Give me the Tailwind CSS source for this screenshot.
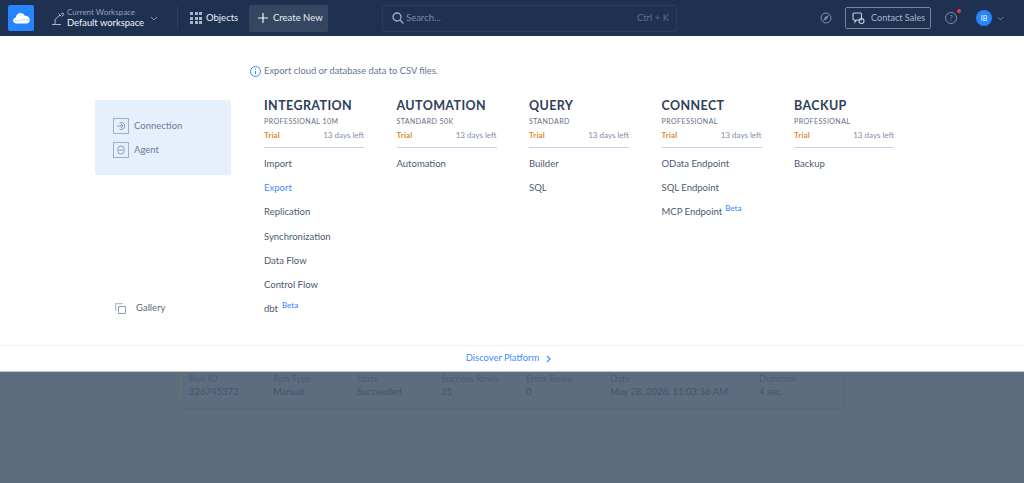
<!DOCTYPE html>
<html lang="en">
<head>
<meta charset="UTF-8" />
<title>Default workspace</title>
<script src="https://cdn.jsdelivr.net/npm/@tailwindcss/browser@4"></script>
</head>
<body class="h-[483px] w-[1024px] overflow-hidden bg-[#5e6c80] font-['Lato','Noto_Sans',sans-serif]">

<!-- top bar -->
<header class="flex h-9 items-center bg-[#1e3150] text-[#e8edf4]">
  <div class="ml-[8px] flex h-[26px] w-[26px] items-center justify-center rounded-[2px] bg-[#2684ff]">
    <svg width="17" height="12" viewBox="0 0 17 12"><path fill="#fff" d="M3.500 11.500C1.500 11.500.2 10.200.2 8.500c0-1.500 1-2.700 2.600-3C3.200 2.800 5.200 1 7.600 1c2 0 3.500 1.100 4.200 2.800 2.900-.2 5 1.800 5 4.200 0 2-1.400 3.500-3.400 3.500z"/><path fill="none" stroke="#9cc4ff" stroke-width=".7" d="M2 9c3 1.200 6-2 9-1.500 2 .3 3.500.8 5 0"/></svg>
  </div>
  <svg class="ml-[17px]" width="15" height="15" viewBox="0 0 15 15" fill="none" stroke="#a9b6c8" stroke-width="1"><path d="M1 13.500h9M4 13V8.500L9 4M7.500 2.500l3 3M10 3l2-1 1 1.500-2 1.500"/></svg>
  <div class="ml-[1px] flex w-[83px] flex-col whitespace-nowrap">
    <span class="text-[8px] leading-[10px] text-[#94a3b8]">Current Workspace</span>
    <span class="text-[9.400px] leading-[12px] text-[#f1f5f9]">Default workspace</span>
  </div>
  <svg width="8" height="5" viewBox="0 0 8 5" fill="none" stroke="#8595ab"><path d="M1 1l3 3 3-3"/></svg>
  <div class="ml-[19px] h-6 w-px bg-[#2c3f5d]"></div>
  <div class="ml-[12px] grid grid-cols-3 gap-[1.500px]">
    <i class="size-[3px] bg-[#a9b6c8]"></i><i class="size-[3px] bg-[#a9b6c8]"></i><i class="size-[3px] bg-[#a9b6c8]"></i>
    <i class="size-[3px] bg-[#a9b6c8]"></i><i class="size-[3px] bg-[#a9b6c8]"></i><i class="size-[3px] bg-[#a9b6c8]"></i>
    <i class="size-[3px] bg-[#a9b6c8]"></i><i class="size-[3px] bg-[#a9b6c8]"></i><i class="size-[3px] bg-[#a9b6c8]"></i>
  </div>
  <span class="ml-[4px] w-[43px] text-[9.500px]">Objects</span>
  <div class="flex h-[27px] w-[79px] items-center rounded-[2px] bg-[#344660] pl-[9px] whitespace-nowrap">
    <svg width="10" height="10" viewBox="0 0 10 10" stroke="#f1f5f9" stroke-width="1.200"><path d="M5 0v10M0 5h10"/></svg>
    <span class="ml-[5px] text-[9.500px]">Create New</span>
  </div>
  <div class="ml-[54px] flex h-[27px] w-[295px] items-center rounded-[2px] border border-[#2a3d5b] pl-[9px] pr-[7px]">
    <svg width="12" height="12" viewBox="0 0 12 12" fill="none" stroke="#9fb0c8" stroke-width="1.300"><circle cx="5" cy="5" r="4"/><path d="M8 8l3.500 3.500"/></svg>
    <span class="ml-[2px] text-[9.500px] text-[#7b8ca6]">Search...</span>
    <span class="ml-auto text-[9.500px] text-[#5f718c]">Ctrl + K</span>
  </div>
  <svg class="ml-[143px]" width="12" height="12" viewBox="0 0 12 12" fill="none" stroke="#7f8ea4"><circle cx="6" cy="6" r="5"/><path d="M9 3L7 7 3 9 5 5z" fill="#7f8ea4" stroke="none"/></svg>
  <div class="ml-[13px] flex h-[22px] w-[86px] items-center rounded-[2px] border border-[#75849b] pl-[6px] whitespace-nowrap">
    <svg width="13" height="13" viewBox="0 0 13 13" fill="none" stroke="#c3cddb" stroke-width="1.100"><path d="M2 1h6.500a1 1 0 0 1 1 1v5a1 1 0 0 1-1 1H4.500L3 10V8H2a1 1 0 0 1-1-1V2a1 1 0 0 1 1-1z"/><circle cx="9.500" cy="9" r="2.500"/></svg>
    <span class="ml-[6px] text-[9.100px] text-[#a9b6c8]">Contact Sales</span>
  </div>
  <div class="relative ml-[14px] flex size-[12px] items-center justify-center rounded-full border border-[#7f8ea4] text-[8px] text-[#7f8ea4]">?
    <span class="absolute right-[-5px] top-[-4px] size-[4px] rounded-full bg-[#ef3b3b]"></span>
  </div>
  <div class="ml-[19px] flex size-4 items-center justify-center rounded-full bg-[#2684ff] text-[7px] text-white">IB</div>
  <svg class="ml-[5px]" width="7" height="5" viewBox="0 0 8 5" fill="none" stroke="#8595ab"><path d="M1 1l3 3 3-3"/></svg>
</header>

<!-- dropdown panel -->
<section class="flex h-[336px] flex-col border-b border-[#c3c8cf] bg-white">
  <div class="flex h-[309px]">
    <aside class="ml-[95px] flex w-[136px] flex-col pt-[64px]">
      <div class="flex h-[75px] flex-col gap-[8px] rounded-[2px] bg-[#e6f0fd] pl-[18px] pt-[18px] text-[9.500px] text-[#6b7a99]">
        <div class="flex h-4 items-center gap-[5px]">
          <span class="flex size-4 items-center justify-center border border-[#9fadd0]">
            <svg width="10" height="10" viewBox="0 0 10 10" fill="none" stroke="#8a99bd"><path d="M1 5h6M5 3l2 2-2 2M3.500 2a3.500 3.500 0 1 1 0 6"/></svg>
          </span>
          Connection
        </div>
        <div class="flex h-4 items-center gap-[5px]">
          <span class="flex size-4 items-center justify-center border border-[#9fadd0]">
            <svg width="10" height="10" viewBox="0 0 10 10" fill="none" stroke="#8a99bd"><path d="M2 4V3.500a3 2.500 0 0 1 6 0V4M2 6v.5a3 2.500 0 0 0 6 0V6M1 5h8"/></svg>
          </span>
          Agent
        </div>
      </div>
      <div class="ml-[20px] mt-[126px] flex items-center gap-[10px] text-[9.500px] text-[#5b6a85]">
        <svg width="11" height="11" viewBox="0 0 11 11" fill="none" stroke="#8e9cc0"><path d="M3.500 3.500h7v7h-7z"/><path d="M.5 8V.5H8" stroke-width="1.500" stroke="#b4bfd8"/></svg>
        Gallery
      </div>
    </aside>
    <div class="flex flex-col pl-[19px]">
      <p class="mt-[29px] flex h-[12px] items-center gap-[3px] text-[9.350px] text-[#66768f]">
        <svg width="11" height="11" viewBox="0 0 11 11" fill="none" stroke="#3f8cff"><circle cx="5.500" cy="5.500" r="5"/><path d="M5.500 5v3M5.500 2.500v1.200"/></svg>
        Export cloud or database data to CSV files.
      </p>
      <div class="ml-[14px] mt-[20px] flex gap-[32.500px]">

        <div class="w-[100px]">
          <h2 class="text-[12.500px] font-bold leading-[18px] tracking-[0.400px] text-[#2f4058]">INTEGRATION</h2>
          <p class="mt-[1px] text-[7px] leading-[10px] tracking-[0.450px] text-[#5f6d82]">PROFESSIONAL 10M</p>
          <div class="mt-[1px] flex h-[15px] items-center justify-between text-[8px]"><b class="font-bold tracking-[0.200px] text-[#e08a2e]">Trial</b><span class="text-[#7e8ca3]">13 days left</span></div>
          <div class="mt-[5px] h-px bg-[#c3d0ea]"></div>
          <ul class="mt-[4px] text-[9.500px] text-[#4b5a70]">
            <li class="flex h-[24.200px] items-center">Import</li>
            <li class="flex h-[24.200px] items-center text-[#3f8cff]">Export</li>
            <li class="flex h-[24.200px] items-center">Replication</li>
            <li class="flex h-[24.200px] items-center">Synchronization</li>
            <li class="flex h-[24.200px] items-center">Data Flow</li>
            <li class="flex h-[24.200px] items-center">Control Flow</li>
            <li class="flex h-[24.200px] items-center">dbt<sup class="ml-[4px] text-[8px] font-medium text-[#3f8cff]">Beta</sup></li>
          </ul>
        </div>

        <div class="w-[100px]">
          <h2 class="text-[12.500px] font-bold leading-[18px] tracking-[0.400px] text-[#2f4058]">AUTOMATION</h2>
          <p class="mt-[1px] text-[7px] leading-[10px] tracking-[0.450px] text-[#5f6d82]">STANDARD 50K</p>
          <div class="mt-[1px] flex h-[15px] items-center justify-between text-[8px]"><b class="font-bold tracking-[0.200px] text-[#e08a2e]">Trial</b><span class="text-[#7e8ca3]">13 days left</span></div>
          <div class="mt-[5px] h-px bg-[#c3d0ea]"></div>
          <ul class="mt-[4px] text-[9.500px] text-[#4b5a70]">
            <li class="flex h-[24.200px] items-center">Automation</li>
          </ul>
        </div>

        <div class="w-[100px]">
          <h2 class="text-[12.500px] font-bold leading-[18px] tracking-[0.400px] text-[#2f4058]">QUERY</h2>
          <p class="mt-[1px] text-[7px] leading-[10px] tracking-[0.450px] text-[#5f6d82]">STANDARD</p>
          <div class="mt-[1px] flex h-[15px] items-center justify-between text-[8px]"><b class="font-bold tracking-[0.200px] text-[#e08a2e]">Trial</b><span class="text-[#7e8ca3]">13 days left</span></div>
          <div class="mt-[5px] h-px bg-[#c3d0ea]"></div>
          <ul class="mt-[4px] text-[9.500px] text-[#4b5a70]">
            <li class="flex h-[24.200px] items-center">Builder</li>
            <li class="flex h-[24.200px] items-center">SQL</li>
          </ul>
        </div>

        <div class="w-[100px]">
          <h2 class="text-[12.500px] font-bold leading-[18px] tracking-[0.400px] text-[#2f4058]">CONNECT</h2>
          <p class="mt-[1px] text-[7px] leading-[10px] tracking-[0.450px] text-[#5f6d82]">PROFESSIONAL</p>
          <div class="mt-[1px] flex h-[15px] items-center justify-between text-[8px]"><b class="font-bold tracking-[0.200px] text-[#e08a2e]">Trial</b><span class="text-[#7e8ca3]">13 days left</span></div>
          <div class="mt-[5px] h-px bg-[#c3d0ea]"></div>
          <ul class="mt-[4px] text-[9.500px] text-[#4b5a70]">
            <li class="flex h-[24.200px] items-center">OData Endpoint</li>
            <li class="flex h-[24.200px] items-center">SQL Endpoint</li>
            <li class="flex h-[24.200px] items-center">MCP Endpoint<sup class="ml-[3px] text-[8px] font-medium text-[#3f8cff]">Beta</sup></li>
          </ul>
        </div>

        <div class="w-[100px]">
          <h2 class="text-[12.500px] font-bold leading-[18px] tracking-[0.400px] text-[#2f4058]">BACKUP</h2>
          <p class="mt-[1px] text-[7px] leading-[10px] tracking-[0.450px] text-[#5f6d82]">PROFESSIONAL</p>
          <div class="mt-[1px] flex h-[15px] items-center justify-between text-[8px]"><b class="font-bold tracking-[0.200px] text-[#e08a2e]">Trial</b><span class="text-[#7e8ca3]">13 days left</span></div>
          <div class="mt-[5px] h-px bg-[#c3d0ea]"></div>
          <ul class="mt-[4px] text-[9.500px] text-[#4b5a70]">
            <li class="flex h-[24.200px] items-center">Backup</li>
          </ul>
        </div>

      </div>
    </div>
  </div>
  <div class="flex flex-1 items-center justify-center gap-[7px] border-t border-[#eef2fa] pr-[7px] text-[9.400px] text-[#3f8cff]">
    Discover Platform
    <svg width="5" height="8" viewBox="0 0 5 8" fill="none" stroke="#3f8cff" stroke-width="1.200"><path d="M1 1l3 3-3 3"/></svg>
  </div>
</section>

<!-- run card behind the overlay -->
<div class="ml-[180px] flex h-[37px] w-[665px] border-b border-r border-[#596779] text-[9.500px] leading-[13px] text-[#465368]">
  <div class="mb-[10px] w-[2px] bg-[#567a6c]"></div>
  <div class="w-[91px] pl-[7px]"><p class="text-[#4d5b72]">Run ID</p><p>326745373</p></div>
  <div class="w-[84px]"><p class="text-[#4d5b72]">Run Type</p><p>Manual</p></div>
  <div class="w-[84px]"><p class="text-[#4d5b72]">State</p><p>Succeeded</p></div>
  <div class="w-[85px]"><p class="text-[#4d5b72]">Success Rows</p><p>35</p></div>
  <div class="w-[84px]"><p class="text-[#4d5b72]">Error Rows</p><p>0</p></div>
  <div class="w-[149px]"><p class="text-[#4d5b72]">Date</p><p>May 28, 2026, 11:03:36 AM</p></div>
  <div><p class="text-[#4d5b72]">Duration</p><p>4 sec</p></div>
</div>
</body>
</html>
